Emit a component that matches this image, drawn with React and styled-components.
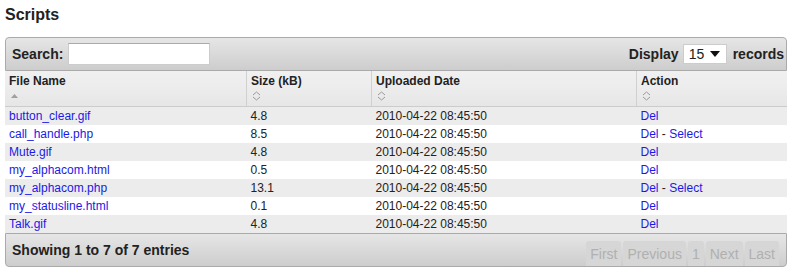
import React from "react";
import styled, { createGlobalStyle } from "styled-components";

const GlobalStyle = createGlobalStyle`
  body {
    margin: 0;
    background: #fff;
    font-family: "Liberation Sans", Arial, sans-serif;
    color: #222;
  }
`;

const Page = styled.div`
  padding: 5px 8px 0 5px;
`;

const Title = styled.h2`
  font-size: 16px;
  font-weight: bold;
  margin: 0 0 13px;
  line-height: 19px;
`;

const Panel = styled.div`
  width: 782px;
`;

const Toolbar = styled.div`
  display: flex;
  align-items: center;
  justify-content: space-between;
  height: 32px;
  padding: 0 ${(p) => (p.$top ? "2px" : "7px")} 0 6px;
  border: 1px solid #aaa;
  background: linear-gradient(#e6e6e6, #cdcdcd);
  color: #222;
  font-size: 14px;
  font-weight: bold;
  border-radius: ${(p) => (p.$top ? "4px 4px 0 0" : "0 0 4px 4px")};
`;

const Field = styled.label`
  display: flex;
  align-items: center;
  gap: ${(p) => p.$gap || "5px"};
`;

const SearchBox = styled.input`
  width: 138px;
  height: 18px;
  border: 1px solid #ccc;
  border-top-color: #aaa;
  padding: 1px;
  background: #fff;
`;

const Select = styled.div`
  display: flex;
  align-items: center;
  justify-content: space-between;
  width: 44px;
  box-sizing: border-box;
  height: 20px;
  padding: 0 6px 0 5px;
  margin: 0 6px 0 4px;
  background: #fff;
  border: 1px solid #ccc;
  font-weight: normal;
  font-size: 14px;
`;

const Table = styled.table`
  width: 100%;
  border-collapse: collapse;
  font-size: 12px;
`;

const Th = styled.th`
  text-align: left;
  padding: 2px 4px 0;
  background: linear-gradient(#f0f0f0 0, #ececec 50%, #e6e6e6 100%);
  border-right: 1px solid #d0d0d0;
  border-bottom: 1px solid #ccc;
  font-weight: bold;
  height: 33px;
  vertical-align: top;
  width: ${(p) => p.$w};

  &:last-child {
    border-right: none;
  }
`;

const ThLabel = styled.div`
  line-height: 16px;
`;

const SortIcon = styled.div`
  height: 14px;
  display: flex;
  align-items: center;
  padding-left: 1px;
`;

const Row = styled.tr`
  background: ${(p) => (p.$odd ? "#ececec" : "#fff")};
`;

const Td = styled.td`
  padding: 0 4px;
  height: 18px;
  line-height: 18px;
`;

const Link = styled.a`
  color: #1a1ae6;
  text-decoration: none;
`;

const Pager = styled.div`
  display: flex;
  align-self: stretch;
  align-items: flex-end;
  gap: 2px;
  font-weight: normal;
`;

const PageButton = styled.span`
  padding: 5px 4px 4px;
  color: #b0b0b0;
  background: #d6d6d6;
  border-radius: 3px 3px 0 0;
`;

const Both = () => (
  <svg width="9" height="10" viewBox="0 0 9 10">
    <path d="M1 4 L4.5 1 L8 4 M1 6 L4.5 9 L8 6" fill="none" stroke="#9a9a9a" strokeWidth="1" />
  </svg>
);

const Asc = () => (
  <svg width="9" height="6" viewBox="0 0 9 6">
    <path d="M1 5 L4.5 1 L8 5 Z" fill="#a0a0a0" />
  </svg>
);

const files = [
  ["button_clear.gif", "4.8", false],
  ["call_handle.php", "8.5", true],
  ["Mute.gif", "4.8", false],
  ["my_alphacom.html", "0.5", false],
  ["my_alphacom.php", "13.1", true],
  ["my_statusline.html", "0.1", false],
  ["Talk.gif", "4.8", false],
];

export default function App() {
  return (
    <Page>
      <GlobalStyle />
      <Title>Scripts</Title>
      <Panel>
        <Toolbar $top>
          <Field>
            Search: <SearchBox />
          </Field>
          <Field $gap="0">
            Display
            <Select>
              15
              <svg width="10" height="6" viewBox="0 0 10 6">
                <path d="M0 0 H10 L5 6 Z" fill="#111" />
              </svg>
            </Select>
            records
          </Field>
        </Toolbar>
        <Table>
          <thead>
            <tr>
              <Th $w="233px">
                <ThLabel>File Name</ThLabel>
                <SortIcon><Asc /></SortIcon>
              </Th>
              <Th $w="116px">
                <ThLabel>Size (kB)</ThLabel>
                <SortIcon><Both /></SortIcon>
              </Th>
              <Th $w="256px">
                <ThLabel>Uploaded Date</ThLabel>
                <SortIcon><Both /></SortIcon>
              </Th>
              <Th>
                <ThLabel>Action</ThLabel>
                <SortIcon><Both /></SortIcon>
              </Th>
            </tr>
          </thead>
          <tbody>
            {files.map(([name, size, sel], i) => (
              <Row key={name} $odd={i % 2 === 0}>
                <Td><Link>{name}</Link></Td>
                <Td>{size}</Td>
                <Td>2010-04-22 08:45:50</Td>
                <Td>
                  <Link>Del</Link>
                  {sel && (
                    <>
                      {" - "}
                      <Link>Select</Link>
                    </>
                  )}
                </Td>
              </Row>
            ))}
          </tbody>
        </Table>
        <Toolbar>
          <span>Showing 1 to 7 of 7 entries</span>
          <Pager>
            <PageButton>First</PageButton>
            <PageButton>Previous</PageButton>
            <PageButton>1</PageButton>
            <PageButton>Next</PageButton>
            <PageButton>Last</PageButton>
          </Pager>
        </Toolbar>
      </Panel>
    </Page>
  );
}
